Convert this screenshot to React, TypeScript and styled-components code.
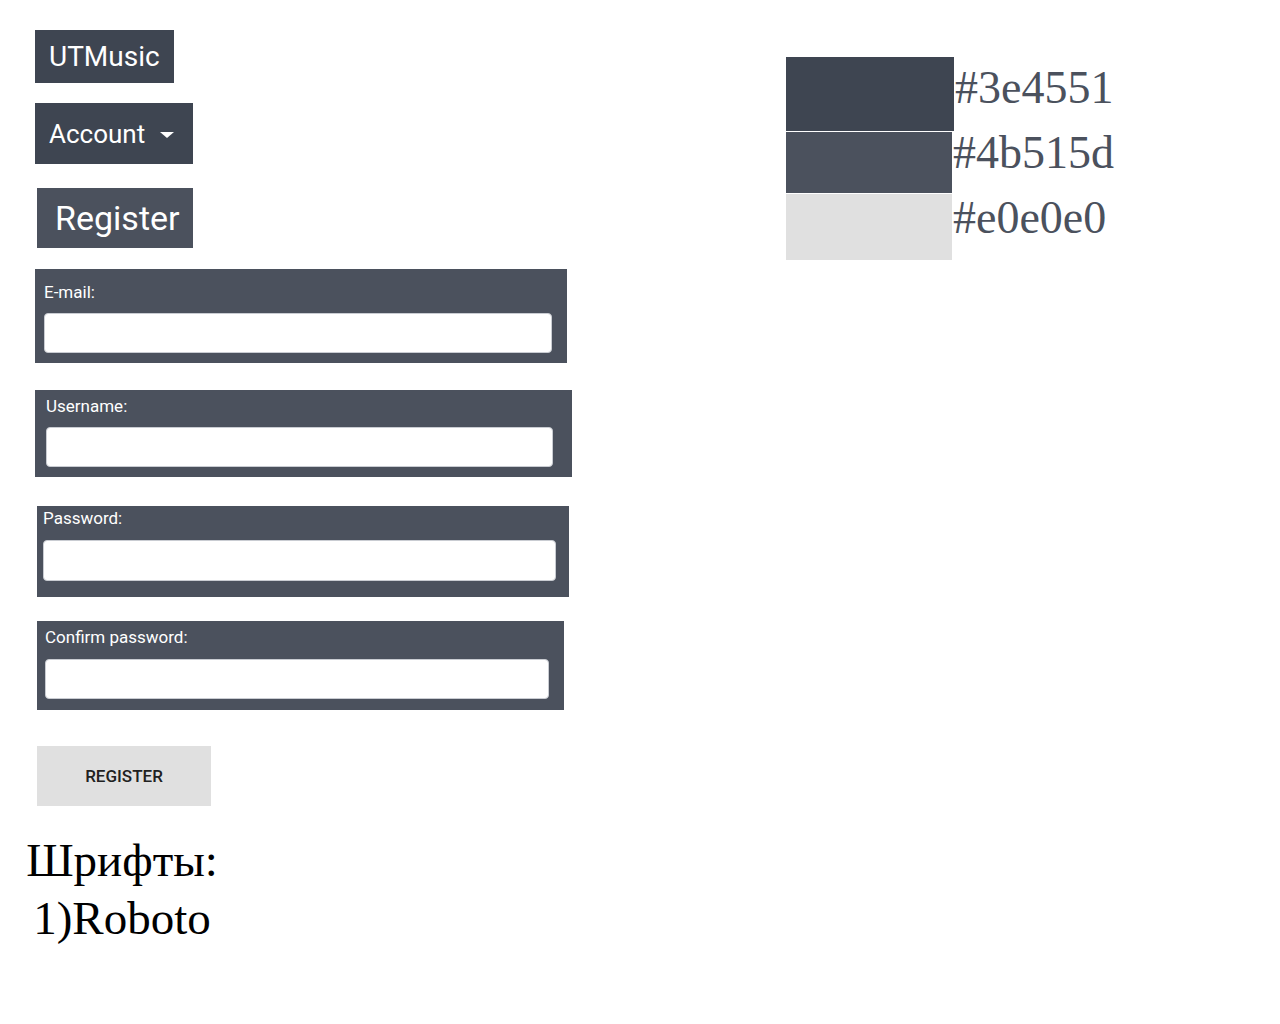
import styled, { createGlobalStyle } from "styled-components";

const GlobalStyle = createGlobalStyle`
  body {
    margin: 0;
    background: #ffffff;
    font-family: Roboto, "Liberation Sans", sans-serif;
  }
`;

const Page = styled.div`
  display: flex;
  align-items: flex-start;
  padding: 30px 0 0 35px;
`;

const LeftColumn = styled.div`
  width: 540px;
  display: flex;
  flex-direction: column;
  align-items: flex-start;
`;

const NavBox = styled.div<{ $bg: string; $size: number; $h: number; $pad: string; $mt: number; $ml?: number }>`
  display: inline-flex;
  align-items: center;
  gap: 15px;
  height: ${(p) => p.$h}px;
  padding: ${(p) => p.$pad};
  margin: ${(p) => p.$mt}px 0 0 ${(p) => p.$ml || 0}px;
  background: ${(p) => p.$bg};
  color: #ffffff;
  font-size: ${(p) => p.$size}px;
  box-sizing: border-box;
`;

const Caret = styled.span`
  width: 0;
  height: 0;
  border-left: 7px solid transparent;
  border-right: 7px solid transparent;
  border-top: 6px solid #ffffff;
  margin-top: 2px;
`;

const FieldPanel = styled.div<{ $width: number; $ml: number; $mt: number; $pad: string }>`
  width: ${(p) => p.$width}px;
  margin: ${(p) => p.$mt}px 0 0 ${(p) => p.$ml}px;
  padding: ${(p) => p.$pad};
  background: #4b515d;
  box-sizing: border-box;
  display: flex;
  flex-direction: column;
`;

const FieldLabel = styled.label<{ $gap: number }>`
  color: #ffffff;
  font-size: 17px;
  line-height: 20px;
  margin-bottom: ${(p) => p.$gap}px;
`;

const TextInput = styled.input<{ $h: number }>`
  height: ${(p) => p.$h}px;
  width: 100%;
  box-sizing: border-box;
  border: 1px solid #c9ccd2;
  border-radius: 4px;
  background: #ffffff;
  outline: none;
`;

const SubmitButton = styled.button`
  margin: 36px 0 0 2px;
  width: 174px;
  height: 60px;
  border: none;
  background: #e0e0e0;
  color: #212121;
  font-family: Roboto, "Liberation Sans", sans-serif;
  font-size: 17px;
  font-weight: 500;
  text-transform: uppercase;
`;

const FontNote = styled.div`
  margin: 25px 0 0 -13px;
  width: 200px;
  text-align: center;
  font-family: "Liberation Serif", serif;
  font-size: 47px;
  line-height: 58px;
  color: #000000;
`;

const Palette = styled.div`
  margin: 27px 0 0 211px;
  display: flex;
  flex-direction: column;
  gap: 1px;
`;

const SwatchRow = styled.div`
  display: flex;
  align-items: flex-start;
`;

const Swatch = styled.div<{ $color: string; $h: number; $w: number }>`
  width: ${(p) => p.$w}px;
  height: ${(p) => p.$h}px;
  background: ${(p) => p.$color};
`;

const SwatchCode = styled.span<{ $shift: number }>`
  margin-top: ${(p) => p.$shift}px;
  font-family: "Liberation Serif", serif;
  font-size: 46px;
  line-height: 46px;
  color: #4b515d;
  margin-left: 1px;
`;

const fields = [
  { label: "E-mail:", width: 532, ml: 0, mt: 21, pad: "13px 15px 10px 9px", gap: 11, h: 40 },
  { label: "Username:", width: 537, ml: 0, mt: 27, pad: "6px 19px 10px 11px", gap: 11, h: 40 },
  { label: "Password:", width: 532, ml: 2, mt: 29, pad: "2px 13px 16px 6px", gap: 12, h: 41 },
  { label: "Confirm password:", width: 527, ml: 2, mt: 24, pad: "6px 15px 11px 8px", gap: 12, h: 40 },
];

const swatches = [
  { color: "#3e4551", w: 168, h: 74, shift: 8 },
  { color: "#4b515d", w: 166, h: 61, shift: -2 },
  { color: "#e0e0e0", w: 166, h: 66, shift: 1 },
];

function App() {
  return (
    <>
      <GlobalStyle />
      <Page>
        <LeftColumn>
          <NavBox $bg="#3e4551" $size={28} $h={53} $pad="0 14px 0 14px" $mt={0}>
            UTMusic
          </NavBox>
          <NavBox $bg="#3e4551" $size={26} $h={61} $pad="0 19px 0 14px" $mt={20}>
            Account
            <Caret />
          </NavBox>
          <NavBox $bg="#4b515d" $size={34} $h={60} $pad="0 13px 0 18px" $mt={24} $ml={2}>
            Register
          </NavBox>

          {fields.map((f) => (
            <FieldPanel key={f.label} $width={f.width} $ml={f.ml} $mt={f.mt} $pad={f.pad}>
              <FieldLabel $gap={f.gap}>{f.label}</FieldLabel>
              <TextInput $h={f.h} type={f.label.includes("assword") ? "password" : "text"} />
            </FieldPanel>
          ))}

          <SubmitButton>Register</SubmitButton>

          <FontNote>
            Шрифты:
            <br />
            1)Roboto
          </FontNote>
        </LeftColumn>

        <Palette>
          {swatches.map((s) => (
            <SwatchRow key={s.color}>
              <Swatch $color={s.color} $w={s.w} $h={s.h} />
              <SwatchCode $shift={s.shift}>{s.color}</SwatchCode>
            </SwatchRow>
          ))}
        </Palette>
      </Page>
    </>
  );
}

export default App;
